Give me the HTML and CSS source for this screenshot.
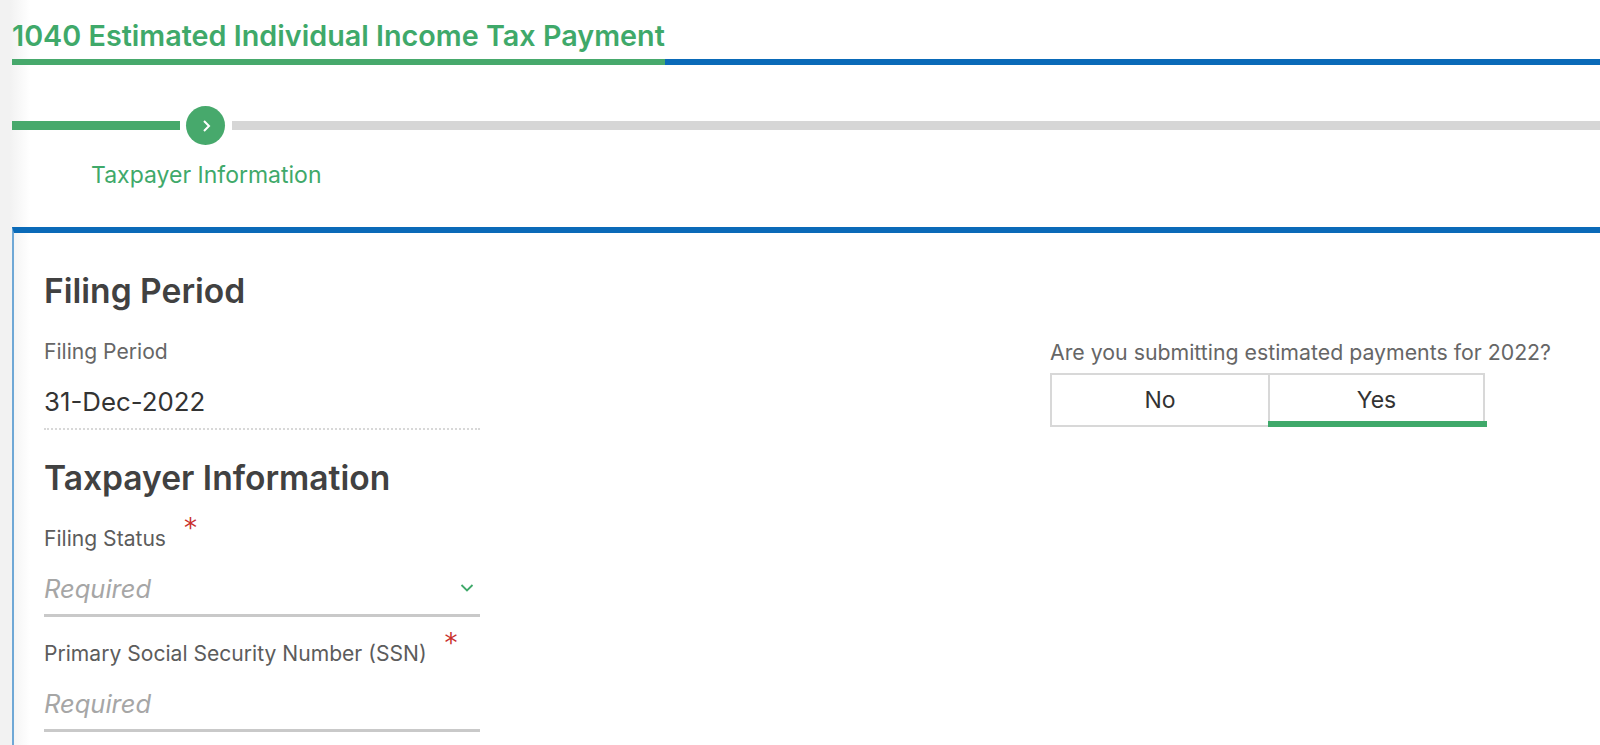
FILE: index.html
```html
<!DOCTYPE html>
<html>
<head>
  <title>1040 Estimated Individual Income Tax Payment</title>
  <link rel="stylesheet" href="styles.css">
</head>
<body>
  <div class="page">
    <div class="title-bar">
      <h1 class="title">1040 Estimated Individual Income Tax Payment</h1>
    </div>

    <div class="stepper">
      <div class="step-track">
        <div class="step-line done"></div>
        <div class="step-circle">
          <svg width="14" height="16" viewBox="0 0 14 16"><path d="M5 3 L10 8 L5 13" fill="none" stroke="#fff" stroke-width="2"/></svg>
        </div>
        <div class="step-line todo"></div>
      </div>
      <div class="step-label">Taxpayer Information</div>
    </div>

    <div class="panel">
      <div class="col-left">
        <h2 class="section-title first">Filing Period</h2>
        <div class="field-label">Filing Period</div>
        <div class="static-value">31-Dec-2022</div>

        <h2 class="section-title">Taxpayer Information</h2>

        <div class="field-label req-label">Filing Status <span class="req">*</span></div>
        <div class="input-line">
          <span class="placeholder">Required</span>
          <svg class="chevron" width="16" height="10" viewBox="0 0 16 10"><path d="M2.5 2 L8 7.5 L13.5 2" fill="none" stroke="#3fa96a" stroke-width="1.8"/></svg>
        </div>

        <div class="field-label req-label second">Primary Social Security Number (SSN) <span class="req">*</span></div>
        <div class="input-line">
          <span class="placeholder">Required</span>
        </div>
      </div>

      <div class="col-right">
        <div class="field-label question">Are you submitting estimated payments for 2022?</div>
        <div class="toggle">
          <div class="toggle-btn">No</div>
          <div class="toggle-btn selected">Yes</div>
        </div>
      </div>
    </div>
  </div>
</body>
</html>
```

FILE: styles.css
```css
html,
body {
  margin: 0;
  height: 100%;
  overflow: hidden;
}

body {
  font-family: Inter, "Liberation Sans", sans-serif;
  color: #333;
  background: linear-gradient(to right, #f2f2f2 0, #f2f2f2 10px, #fff 30px);
}

.page {
  padding-left: 12px;
}

.title-bar {
  height: 59px;
  border-bottom: 6px solid #0a6ab8;
}

.title {
  display: inline-block;
  margin: 0;
  height: 59px;
  line-height: 71px;
  font-size: 28.75px;
  font-weight: 600;
  color: #3fa96a;
  border-bottom: 6px solid #47a96c;
  white-space: nowrap;
}

.stepper {
  height: 162px;
}

.step-track {
  display: flex;
  align-items: center;
  padding-top: 41px;
}

.step-line {
  height: 9px;
}

.step-line.done {
  width: 168px;
  background: #47a96c;
}

.step-line.todo {
  flex: 1;
  background: #d6d6d6;
}

.step-circle {
  display: flex;
  align-items: center;
  justify-content: center;
  width: 39px;
  height: 39px;
  margin: 0 7px 0 6px;
  border-radius: 50%;
  background: #47a96c;
}

.step-label {
  margin: 16px 0 0 79px;
  font-size: 23px;
  line-height: 28px;
  color: #3fa96a;
}

.panel {
  display: flex;
  height: 520px;
  padding-left: 30px;
  border-top: 6px solid #0a6ab8;
  border-left: 2px solid #6fa8d6;
}

.col-left {
  width: 436px;
}

.col-right {
  margin-left: 570px;
  padding-top: 106px;
}

.section-title {
  margin: 0;
  font-size: 33.6px;
  line-height: 40px;
  font-weight: 600;
  color: #414141;
  padding-top: 28px;
}

.section-title.first {
  padding-top: 38px;
  margin-bottom: 28px;
}

.field-label {
  font-size: 21.1px;
  line-height: 26px;
  color: #666;
  white-space: nowrap;
}

.question {
  font-size: 21.3px;
}

.static-value {
  height: 50px;
  margin-top: 15px;
  line-height: 44px;
  font-size: 25.8px;
  color: #333;
  border-bottom: 2px dotted #d8d8d8;
  box-sizing: border-box;
}

.req-label {
  margin-top: 28px;
  color: #5c5c5c;
}

.req-label.second {
  margin-top: 24px;
}

.req {
  position: relative;
  top: -9px;
  left: 12px;
  font-family: "DejaVu Sans", sans-serif;
  font-size: 26px;
  line-height: 0;
  color: #c9302c;
}

.input-line {
  display: flex;
  align-items: center;
  justify-content: space-between;
  height: 65px;
  box-sizing: border-box;
  padding: 10px 5px 0 0;
  border-bottom: 3px solid #c9c9c9;
}

.placeholder {
  font-size: 25.5px;
  font-style: italic;
  color: #a6a6a6;
}

.toggle {
  display: flex;
  width: 435px;
  height: 54px;
  margin-top: 8px;
  box-sizing: border-box;
  border: 2px solid #d8d8d8;
}

.toggle-btn {
  position: relative;
  flex: 1;
  text-align: center;
  line-height: 50px;
  font-size: 23px;
  color: #333;
}

.toggle-btn:first-child {
  flex: 0 0 216px;
}

.toggle-btn + .toggle-btn {
  border-left: 2px solid #d8d8d8;
}

.toggle-btn.selected::after {
  content: "";
  position: absolute;
  left: -2px;
  right: -4px;
  bottom: -2px;
  height: 6px;
  background: #3fa96a;
}
```
